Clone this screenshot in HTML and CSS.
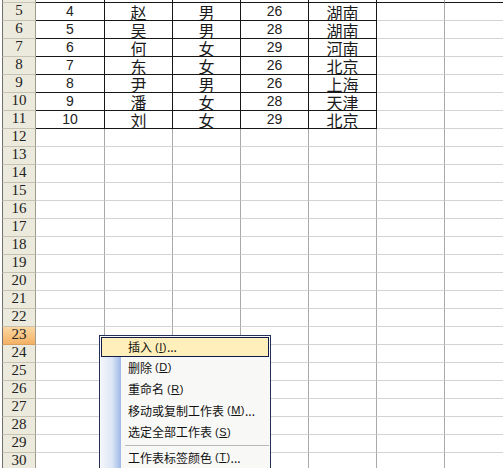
FILE: index.html
```html
<!DOCTYPE html>
<html>
<head>
<meta charset="utf-8">
<link rel="stylesheet" href="styles.css">
</head>
<body>
<div class="sheet">
  <div class="row stub"><div class="rh"></div><div class="c a t"></div><div class="c t"></div><div class="c t"></div><div class="c t"></div><div class="c t"></div><div class="c t2"></div><div class="c t2"></div></div>
  <div class="row"><div class="rh">5</div><div class="c a t n">4</div><div class="c t z">赵</div><div class="c t z">男</div><div class="c t n">26</div><div class="c t z">湖南</div><div class="c"></div><div class="c"></div></div>
  <div class="row"><div class="rh">6</div><div class="c a t n">5</div><div class="c t z">吴</div><div class="c t z">男</div><div class="c t n">28</div><div class="c t z">湖南</div><div class="c"></div><div class="c"></div></div>
  <div class="row"><div class="rh">7</div><div class="c a t n">6</div><div class="c t z">何</div><div class="c t z">女</div><div class="c t n">29</div><div class="c t z">河南</div><div class="c"></div><div class="c"></div></div>
  <div class="row"><div class="rh">8</div><div class="c a t n">7</div><div class="c t z">东</div><div class="c t z">女</div><div class="c t n">26</div><div class="c t z">北京</div><div class="c"></div><div class="c"></div></div>
  <div class="row"><div class="rh">9</div><div class="c a t n">8</div><div class="c t z">尹</div><div class="c t z">男</div><div class="c t n">26</div><div class="c t z">上海</div><div class="c"></div><div class="c"></div></div>
  <div class="row"><div class="rh">10</div><div class="c a t n">9</div><div class="c t z">潘</div><div class="c t z">女</div><div class="c t n">28</div><div class="c t z">天津</div><div class="c"></div><div class="c"></div></div>
  <div class="row"><div class="rh">11</div><div class="c a t n">10</div><div class="c t z">刘</div><div class="c t z">女</div><div class="c t n">29</div><div class="c t z">北京</div><div class="c"></div><div class="c"></div></div>
  <div class="row"><div class="rh">12</div><div class="c a"></div><div class="c"></div><div class="c"></div><div class="c"></div><div class="c"></div><div class="c"></div><div class="c"></div></div>
  <div class="row"><div class="rh">13</div><div class="c a"></div><div class="c"></div><div class="c"></div><div class="c"></div><div class="c"></div><div class="c"></div><div class="c"></div></div>
  <div class="row"><div class="rh">14</div><div class="c a"></div><div class="c"></div><div class="c"></div><div class="c"></div><div class="c"></div><div class="c"></div><div class="c"></div></div>
  <div class="row"><div class="rh">15</div><div class="c a"></div><div class="c"></div><div class="c"></div><div class="c"></div><div class="c"></div><div class="c"></div><div class="c"></div></div>
  <div class="row"><div class="rh">16</div><div class="c a"></div><div class="c"></div><div class="c"></div><div class="c"></div><div class="c"></div><div class="c"></div><div class="c"></div></div>
  <div class="row"><div class="rh">17</div><div class="c a"></div><div class="c"></div><div class="c"></div><div class="c"></div><div class="c"></div><div class="c"></div><div class="c"></div></div>
  <div class="row"><div class="rh">18</div><div class="c a"></div><div class="c"></div><div class="c"></div><div class="c"></div><div class="c"></div><div class="c"></div><div class="c"></div></div>
  <div class="row"><div class="rh">19</div><div class="c a"></div><div class="c"></div><div class="c"></div><div class="c"></div><div class="c"></div><div class="c"></div><div class="c"></div></div>
  <div class="row"><div class="rh">20</div><div class="c a"></div><div class="c"></div><div class="c"></div><div class="c"></div><div class="c"></div><div class="c"></div><div class="c"></div></div>
  <div class="row"><div class="rh">21</div><div class="c a"></div><div class="c"></div><div class="c"></div><div class="c"></div><div class="c"></div><div class="c"></div><div class="c"></div></div>
  <div class="row"><div class="rh">22</div><div class="c a"></div><div class="c"></div><div class="c"></div><div class="c"></div><div class="c"></div><div class="c"></div><div class="c"></div></div>
  <div class="row"><div class="rh sel">23</div><div class="c a"></div><div class="c"></div><div class="c"></div><div class="c"></div><div class="c"></div><div class="c"></div><div class="c"></div></div>
  <div class="row"><div class="rh">24</div><div class="c a"></div><div class="c"></div><div class="c"></div><div class="c"></div><div class="c"></div><div class="c"></div><div class="c"></div></div>
  <div class="row"><div class="rh">25</div><div class="c a"></div><div class="c"></div><div class="c"></div><div class="c"></div><div class="c"></div><div class="c"></div><div class="c"></div></div>
  <div class="row"><div class="rh">26</div><div class="c a"></div><div class="c"></div><div class="c"></div><div class="c"></div><div class="c"></div><div class="c"></div><div class="c"></div></div>
  <div class="row"><div class="rh">27</div><div class="c a"></div><div class="c"></div><div class="c"></div><div class="c"></div><div class="c"></div><div class="c"></div><div class="c"></div></div>
  <div class="row"><div class="rh">28</div><div class="c a"></div><div class="c"></div><div class="c"></div><div class="c"></div><div class="c"></div><div class="c"></div><div class="c"></div></div>
  <div class="row"><div class="rh">29</div><div class="c a"></div><div class="c"></div><div class="c"></div><div class="c"></div><div class="c"></div><div class="c"></div><div class="c"></div></div>
  <div class="row"><div class="rh">30</div><div class="c a"></div><div class="c"></div><div class="c"></div><div class="c"></div><div class="c"></div><div class="c"></div><div class="c"></div></div>
</div>

<div class="menu">
  <div class="mi on">插入<span class="k">(<u>I</u>)</span>...</div>
  <div class="mi">删除<span class="k">(<u>D</u>)</span></div>
  <div class="mi">重命名<span class="k">(<u>R</u>)</span></div>
  <div class="mi">移动或复制工作表<span class="k">(<u>M</u>)</span>...</div>
  <div class="mi">选定全部工作表<span class="k">(<u>S</u>)</span></div>
  <div class="sep"></div>
  <div class="mi">工作表标签颜色<span class="k">(<u>T</u>)</span>...</div>
</div>
</body>
</html>
```

FILE: styles.css
```css
* { box-sizing: border-box; margin: 0; padding: 0; }
html, body { width: 503px; height: 468px; overflow: hidden; background: #fff; }
body { position: relative; padding-left: 2px; font-family: "Noto Sans CJK SC", sans-serif; color: #111; }

.sheet { display: flex; flex-direction: column; width: 501px; overflow: hidden; }
.row { display: flex; height: 18px; flex: none; }
.row.stub { height: 3px; }

.rh {
  width: 34px; flex: none;
  background: #ECEADD;
  border-left: 1px solid #6f6f6f;
  border-right: 1px solid #9f9c8b;
  border-bottom: 1px solid #c6c3b2;
  display: flex; align-items: flex-end; justify-content: center;
  font: 15px/1 "Liberation Serif", serif; color: #222;
  padding-bottom: 2px;
}
.rh.sel { background: linear-gradient(#FBD7A2, #F3B165); border-bottom-color: #d9a060; }

.c {
  width: 68px; flex: none;
  border-right: 1px solid #a9a9a9;
  border-bottom: 1px solid #d3d3d3;
  display: flex; align-items: flex-end; justify-content: center;
}
.c.a { width: 69px; }
.c.t { border-right-color: #161616; border-bottom-color: #161616; }
.c.t2 { border-bottom-color: #161616; }

.n { font: 14px/1 "Liberation Sans", sans-serif; color: #222; padding-bottom: 2px; }
.z { font: 16px/16px "Noto Sans CJK SC", sans-serif; color: #1a1a1a; }

.menu {
  position: absolute; left: 99px; top: 335px;
  width: 172px; height: 150px;
  border: 1px solid #25305a;
  padding: 1px;
  background: linear-gradient(to right, #F3F6FB, #DCE6F6 55%, #9DB8E6) no-repeat 0 0 / 20px 100%, #F8F8F6;
  background-origin: content-box;
  font: 12px/1 "Noto Sans CJK SC", sans-serif; color: #111;
}
.mi { height: 21.5px; display: flex; align-items: center; padding-left: 27px; white-space: nowrap; }
.mi.on { height: 20px; padding-left: 26px; background: #FFEFBA; border: 1px solid #121c4a; }
.k { margin-left: 3px; font-family: "Liberation Sans", sans-serif; font-size: 11px; letter-spacing: 0.5px; }
.k u { text-underline-offset: 1px; }
.sep { height: 4px; margin-left: 24px; display: flex; align-items: center; }
.sep::before { content: ""; flex: 1; height: 1px; background: #b9b9b9; }
```
